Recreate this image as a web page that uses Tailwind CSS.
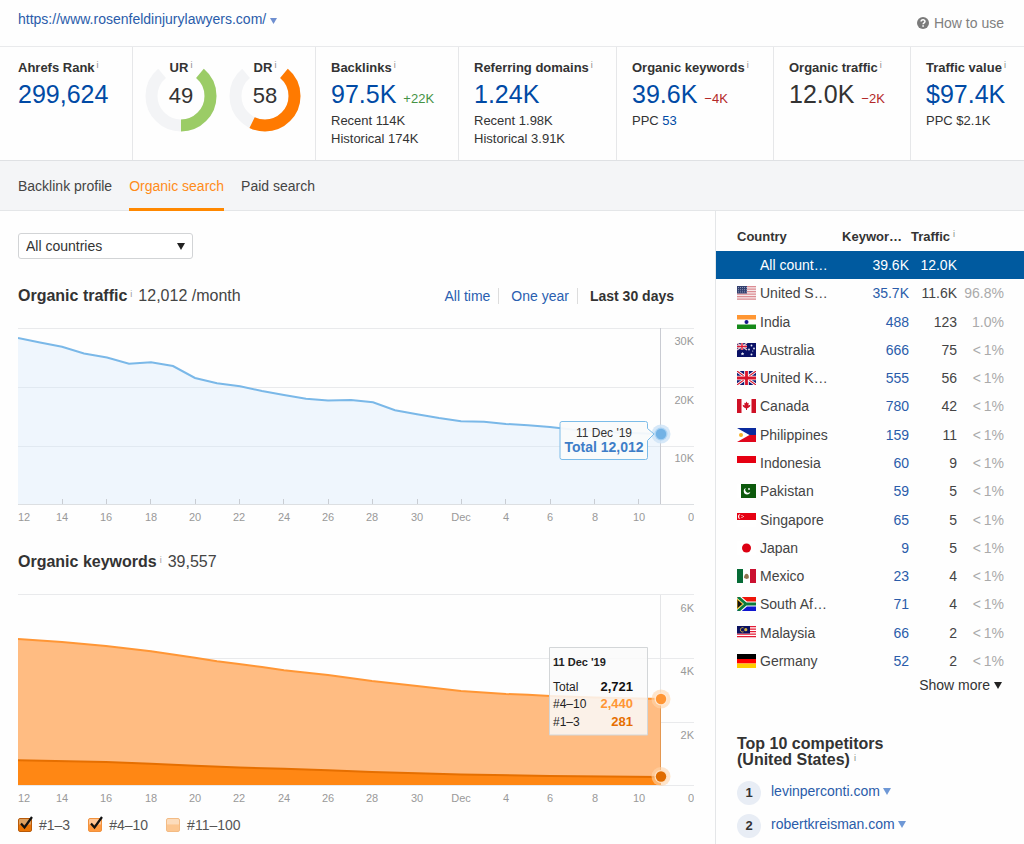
<!DOCTYPE html>
<html lang="en">
<head>
<meta charset="utf-8">
<meta name="viewport" content="width=device-width, initial-scale=1">
<title>Site overview</title>
<script src="https://cdn.jsdelivr.net/npm/@tailwindcss/browser@4"></script>
</head>
<body class="flex min-h-screen flex-col bg-[#fefefe] font-['Liberation_Sans',Arial,sans-serif] text-[#333]">

<header class="flex h-[47px] items-center justify-between border-b border-[#e9eaec] pl-[18px] pr-5">
  <a href="#" class="-mt-2 flex items-center gap-1 text-sm text-[#2a5caa]">https://www.rosenfeldinjurylawyers.com/
    <svg class="mt-1 h-[6px] w-[7px]" viewBox="0 0 7 6" aria-hidden="true"><path d="M0 0h7L3.500 6z" fill="#6f8fd0"/></svg></a>
  <a href="#" class="flex items-center gap-[5px] text-sm text-[#808080]">
    <svg class="h-3 w-3" viewBox="0 0 12 12" aria-hidden="true"><circle cx="6" cy="6" r="6" fill="#7b7b7b"/><path d="M4.100 4.600C4.100 2.200 8 2.300 8 4.500 8 5.900 6.100 5.700 6.100 7.200" fill="none" stroke="#fff" stroke-width="1.500"/><path d="M5.300 8.300h1.600v1.500H5.300z" fill="#fff"/></svg>
    How to use</a>
</header>

<section class="grid h-[114px] grid-cols-[133fr_183fr_143fr_158fr_157fr_137fr_113fr] border-b border-[#dfe1e4] text-[13px] leading-[18px] whitespace-nowrap *:border-r *:border-[#e6e7e9] *:pt-3 *:last:border-r-0">
  <div class="pl-[18px]">
    <h2 class="font-bold">Ahrefs Rank<sup class="ml-[2px] text-[9px] font-normal text-[#888]">i</sup></h2>
    <a href="#" class="block text-[25px] leading-[35px] text-[#004aa5]">299,624</a>
  </div>
  <div class="flex gap-3 pl-3">
    <div class="relative w-[72px]">
      <svg class="absolute left-0 top-[1px] h-[72px] w-[72px]" viewBox="0 0 72 72" fill="none" stroke-width="12" aria-hidden="true"><g transform="rotate(-90 36 36)"><circle cx="36" cy="36" r="29.500" pathLength="360" stroke="#f3f4f6" stroke-dasharray="280 360" stroke-dashoffset="-40"/><circle cx="36" cy="36" r="29.500" pathLength="360" stroke="#9bcc66" stroke-dasharray="140 360" stroke-dashoffset="-40"/></g></svg>
      <h2 class="relative text-center font-bold">UR<sup class="ml-[2px] text-[9px] font-normal text-[#888]">i</sup></h2>
      <p class="relative text-center text-[22px] leading-[37px]">49</p>
    </div>
    <div class="relative w-[72px]">
      <svg class="absolute left-0 top-[1px] h-[72px] w-[72px]" viewBox="0 0 72 72" fill="none" stroke-width="12" aria-hidden="true"><g transform="rotate(-90 36 36)"><circle cx="36" cy="36" r="29.500" pathLength="360" stroke="#f3f4f6" stroke-dasharray="280 360" stroke-dashoffset="-40"/><circle cx="36" cy="36" r="29.500" pathLength="360" stroke="#ff7a00" stroke-dasharray="166 360" stroke-dashoffset="-40"/></g></svg>
      <h2 class="relative text-center font-bold">DR<sup class="ml-[2px] text-[9px] font-normal text-[#888]">i</sup></h2>
      <p class="relative text-center text-[22px] leading-[37px]">58</p>
    </div>
  </div>
  <div class="pl-[15px]">
    <h2 class="font-bold">Backlinks<sup class="ml-[2px] text-[9px] font-normal text-[#888]">i</sup></h2>
    <p class="flex h-[35px] items-baseline gap-[7px] leading-[35px]"><a href="#" class="text-[25px] text-[#004aa5]">97.5K</a><span class="text-[#459245]">+22K</span></p>
    <p>Recent 114K</p>
    <p>Historical 174K</p>
  </div>
  <div class="pl-[15px]">
    <h2 class="font-bold">Referring domains<sup class="ml-[2px] text-[9px] font-normal text-[#888]">i</sup></h2>
    <a href="#" class="block text-[25px] leading-[35px] text-[#004aa5]">1.24K</a>
    <p>Recent 1.98K</p>
    <p>Historical 3.91K</p>
  </div>
  <div class="pl-[15px]">
    <h2 class="font-bold">Organic keywords<sup class="ml-[2px] text-[9px] font-normal text-[#888]">i</sup></h2>
    <p class="flex h-[35px] items-baseline gap-[7px] leading-[35px]"><a href="#" class="text-[25px] text-[#004aa5]">39.6K</a><span class="text-[#b32929]">−4K</span></p>
    <p>PPC <a href="#" class="text-[#004aa5]">53</a></p>
  </div>
  <div class="pl-[15px]">
    <h2 class="font-bold">Organic traffic<sup class="ml-[2px] text-[9px] font-normal text-[#888]">i</sup></h2>
    <p class="flex h-[35px] items-baseline gap-[7px] leading-[35px]"><span class="text-[25px]">12.0K</span><span class="text-[#b32929]">−2K</span></p>
  </div>
  <div class="pl-[15px]">
    <h2 class="font-bold">Traffic value<sup class="ml-[2px] text-[9px] font-normal text-[#888]">i</sup></h2>
    <a href="#" class="block text-[25px] leading-[35px] text-[#004aa5]">$97.4K</a>
    <p>PPC $2.1K</p>
  </div>
</section>

<nav class="flex h-[50px] gap-[17px] border-b border-[#e4e6e8] bg-[#f4f5f7] pl-[18px] text-sm text-[#444]">
  <a href="#" class="flex items-center">Backlink profile</a>
  <a href="#" class="-mb-px flex items-center border-b-[3px] border-[#ff8800] pt-[2px] text-[#ff8c1a]">Organic search</a>
  <a href="#" class="flex items-center">Paid search</a>
</nav>

<div class="flex flex-1">
<main class="min-w-0 flex-1 pl-[18px] pr-[21px] pt-[22px]">
  <div class="relative w-[175px]">
    <select aria-label="Country" class="block h-[26px] w-full appearance-none rounded-[3px] border border-[#d2d4d6] bg-white pl-[7px] text-sm leading-5 text-[#333]"><option>All countries</option></select>
    <svg class="pointer-events-none absolute right-2 top-[10px] h-[7px] w-2" viewBox="0 0 8 7" aria-hidden="true"><path d="M0 0h8L4 7z" fill="#222"/></svg>
  </div>

  <div class="mt-[25px] flex h-6 items-center justify-between">
    <h2 class="text-base font-bold">Organic traffic<sup class="ml-[3px] text-[9px] font-normal text-[#999]">i</sup><span class="ml-[6px] font-normal text-[#444]">12,012 /month</span></h2>
    <div class="mr-5 flex items-center text-sm">
      <a href="#" class="text-[#2a5fb0]">All time</a>
      <a href="#" class="ml-2 border-l border-[#ddd] pl-3 leading-4 text-[#2a5fb0]">One year</a>
      <a href="#" class="ml-2 border-l border-[#ddd] pl-3 leading-4 font-bold">Last 30 days</a>
    </div>
  </div>

  <svg class="mt-[7px] block h-auto w-full" viewBox="18 315 676 215" role="img" aria-label="Organic traffic chart">
    <g stroke="#e9eaec"><path d="M18 328.500H694M18 387.500H694M18 446.500H694"/><path d="M18 504.500H694" stroke="#dcdfe2"/></g>
    <path d="M18 338L40 342.500 62 346.700 84 353.500 107 357.500 129 363.700 151 362.300 173 366 195 378 217 383.300 240 386.300 262 391 284 395 306 398.800 328 400.600 351 400 373 402.300 395 410.300 417 414.300 439 418 461 421.200 484 421.700 506 424 528 425.200 550 427 572 429.500 595 431 617 432.500 639 433.300 661 434V504H18z" fill="#d5e8fb" fill-opacity=".35"/>
    <path d="M18 338L40 342.500 62 346.700 84 353.500 107 357.500 129 363.700 151 362.300 173 366 195 378 217 383.300 240 386.300 262 391 284 395 306 398.800 328 400.600 351 400 373 402.300 395 410.300 417 414.300 439 418 461 421.200 484 421.700 506 424 528 425.200 550 427 572 429.500 595 431 617 432.500 639 433.300 661 434" fill="none" stroke="#7ab8e8" stroke-width="2"/>
    <path d="M62.500 499v5M106.500 499v5M150.500 499v5M195.500 499v5M239.500 499v5M283.500 499v5M328.500 499v5M372.500 499v5M417.500 499v5M461.500 499v5M505.500 499v5M550.500 499v5M594.500 499v5M638.500 499v5" stroke="#c9cdd3"/>
    <path d="M660.500 328V504" stroke="#c9cbd2"/>
    <circle cx="661" cy="434" r="9.500" fill="#cfe4f7" fill-opacity=".85"/><circle cx="661" cy="434" r="6.500" fill="#a9d2f3"/><circle cx="661" cy="434" r="5.200" fill="#72b2e5"/>
    <path d="M562 421.500H645.500Q647.500 421.500 647.500 423.500V428.500L654 434 647.500 440.500V457.500Q647.500 459.500 645.500 459.500H562Q560 459.500 560 457.500V423.500Q560 421.500 562 421.500z" fill="#fafbfb" fill-opacity=".93" stroke="#7cbce8"/>
    <g text-anchor="middle"><text x="604" y="437" font-size="12" fill="#333">11 Dec '19</text><text x="604" y="452" font-size="14" font-weight="bold" fill="#3e7ec8">Total 12,012</text></g>
    <g font-size="11" fill="#999" text-anchor="middle">
      <text x="24" y="521">12</text><text x="62" y="521">14</text><text x="106" y="521">16</text><text x="151" y="521">18</text><text x="195" y="521">20</text><text x="239" y="521">22</text><text x="284" y="521">24</text><text x="328" y="521">26</text><text x="372" y="521">28</text><text x="417" y="521">30</text><text x="461" y="521">Dec</text><text x="506" y="521">4</text><text x="550" y="521">6</text><text x="595" y="521">8</text><text x="639" y="521">10</text>
    </g>
    <g font-size="11" fill="#999" text-anchor="end"><text x="694" y="345">30K</text><text x="694" y="404">20K</text><text x="694" y="462">10K</text><text x="694" y="521">0</text></g>
  </svg>

  <h2 class="mt-5 h-6 text-base font-bold">Organic keywords<sup class="ml-[3px] text-[9px] font-normal text-[#999]">i</sup><span class="ml-[6px] font-normal text-[#444]">39,557</span></h2>

  <svg class="mt-[11px] block h-auto w-full" viewBox="18 585 676 222" role="img" aria-label="Organic keywords chart">
    <path d="M18 594.500H694M18 658.500H694M18 722.500H694M18 785.500H694" stroke="#e9eaec"/>
    <path d="M660.500 595V785" stroke="#e4e5e7"/>
    <path d="M18 639L62 642 106 646 151 651.300 195 657.800 217 661.300 239 664 262 667 284 670.300 328 675 372 681 417 686 461 691 506 694 528 694.800 550 696 595 697.500 661 699V785H18z" fill="#ffbc82"/>
    <path d="M18 760.300L106 762 151 763.800 195 765.700 239 767.500 284 768.700 328 770.300 372 772 417 773.300 461 774.500 550 776 661 777V785H18z" fill="#ff8714"/>
    <path d="M18 639L62 642 106 646 151 651.300 195 657.800 217 661.300 239 664 262 667 284 670.300 328 675 372 681 417 686 461 691 506 694 528 694.800 550 696 595 697.500 661 699" fill="none" stroke="#ff9635" stroke-width="2"/>
    <path d="M18 760.300L106 762 151 763.800 195 765.700 239 767.500 284 768.700 328 770.300 372 772 417 773.300 461 774.500 550 776 661 777" fill="none" stroke="#e66f00" stroke-width="2"/>
    <path d="M660.500 699V785" stroke="#d8873a" stroke-opacity=".7"/>
    <circle cx="661" cy="699" r="9.500" fill="#ffd3a8" fill-opacity=".6"/><circle cx="661" cy="699" r="6.500" fill="#ffe9d4"/><circle cx="661" cy="699" r="5.200" fill="#ff9635"/>
    <circle cx="661" cy="776.500" r="9.500" fill="#ffd3a8" fill-opacity=".6"/><circle cx="661" cy="776.500" r="6.500" fill="#ffe0c0"/><circle cx="661" cy="776.500" r="5.200" fill="#e06c00"/>
    <path d="M549.500 647.500H647.500V735H549.500z" fill="#fafafa" fill-opacity=".85" stroke="#d3d6d8"/>
    <g font-size="12" fill="#222"><text x="553" y="666" font-weight="bold" font-size="11">11 Dec '19</text><text x="553" y="691">Total</text><text x="553" y="708">#4–10</text><text x="553" y="726">#1–3</text></g>
    <g font-size="13" font-weight="bold" text-anchor="end"><text x="633" y="691" fill="#111">2,721</text><text x="633" y="708" fill="#ff9635">2,440</text><text x="633" y="726" fill="#e66f00">281</text></g>
    <g font-size="11" fill="#999" text-anchor="middle">
      <text x="24" y="802">12</text><text x="62" y="802">14</text><text x="106" y="802">16</text><text x="151" y="802">18</text><text x="195" y="802">20</text><text x="239" y="802">22</text><text x="284" y="802">24</text><text x="328" y="802">26</text><text x="372" y="802">28</text><text x="417" y="802">30</text><text x="461" y="802">Dec</text><text x="506" y="802">4</text><text x="550" y="802">6</text><text x="595" y="802">8</text><text x="639" y="802">10</text>
    </g>
    <g font-size="11" fill="#999" text-anchor="end"><text x="694" y="612">6K</text><text x="694" y="675">4K</text><text x="694" y="739">2K</text><text x="694" y="802">0</text></g>
  </svg>

  <div class="mt-2 flex h-5 items-center gap-[18px] text-sm text-[#555]">
    <label class="relative flex items-center gap-[7px]"><input type="checkbox" checked class="peer h-[14px] w-[14px] appearance-none rounded-[2px] border border-[#b85a08] bg-linear-to-b from-[#dca060] from-40% to-[#ea7404] to-50%"><svg class="pointer-events-none invisible absolute left-[2px] top-0 h-4 w-[13px] peer-checked:visible" viewBox="0 0 13 16" fill="none" aria-hidden="true"><path d="M1 8.500L4.500 12.500 12 2" stroke="#111" stroke-width="2.200"/></svg>#1–3</label>
    <label class="relative flex items-center gap-[7px]"><input type="checkbox" checked class="peer h-[14px] w-[14px] appearance-none rounded-[2px] border border-[#f0913c] bg-linear-to-b from-[#ffc594] from-40% to-[#ff9a40] to-50%"><svg class="pointer-events-none invisible absolute left-[2px] top-0 h-4 w-[13px] peer-checked:visible" viewBox="0 0 13 16" fill="none" aria-hidden="true"><path d="M1 8.500L4.500 12.500 12 2" stroke="#111" stroke-width="2.200"/></svg>#4–10</label>
    <label class="relative flex items-center gap-[7px]"><input type="checkbox" class="peer h-[14px] w-[14px] appearance-none rounded-[2px] border border-[#f3bb84] bg-linear-to-b from-[#fcdcbc] from-40% to-[#fcc690] to-50%">#11–100</label>
  </div>
</main>

<aside class="w-[309px] shrink-0 border-l border-[#e4e6e8] pt-3">
  <table class="h-[452px] w-full table-fixed border-collapse text-right text-sm leading-5">
    <colgroup><col class="w-[118px]"><col class="w-[75px]"><col class="w-[48px]"><col></colgroup>
    <thead><tr class="h-7 text-[13px] whitespace-nowrap"><th class="pl-[21px] text-left">Country</th><th class="pr-[7px]">Keywor…</th><th class="text-left" colspan="2"><span class="pl-[2px]">Traffic</span><sup class="ml-[3px] text-[9px] font-normal text-[#888]">i</sup></th></tr></thead>
    <tbody class="text-[#444] [&_svg]:h-[14px] [&_svg]:w-[19px] [&_td:first-child]:pl-[21px] [&_td:last-child]:pr-5 [&_td:last-child]:text-[#aaa] [&_td:first-child>div]:flex [&_td:first-child>div]:items-center [&_td:first-child>div]:gap-1 [&_a]:text-[#2a5caa] whitespace-nowrap">
      <tr class="h-7 bg-[#005a9f] text-white"><td><div><span class="w-[19px]"></span>All count…</div></td><td>39.6K</td><td>12.0K</td><td></td></tr>
      <tr class="h-7"><td><div><svg viewBox="0 0 19 14"><path fill="#f6e9ea" d="M0 0h19v14H0z"/><path d="M0 .7h19M0 3.200h19M0 5.700h19M0 8.200h19M0 10.700h19M0 13.200h19" stroke="#dc8d94" stroke-width="1.200"/><path fill="#34406f" d="M0 0h10v7.500H0z"/><path d="M1 1.500h9M1 3.700h9M1 5.900h9" stroke="#8d96b5" stroke-dasharray="1 1"/></svg>United S…</div></td><td><a href="#">35.7K</a></td><td>11.6K</td><td>96.8%</td></tr>
      <tr class="h-7"><td><div><svg viewBox="0 0 19 14"><path fill="#fff" d="M0 0h19v14H0z"/><path fill="#ff9632" d="M0 0h19v4.500H0z"/><path fill="#158a1a" d="M0 9.500h19V14H0z"/><circle cx="9.500" cy="7" r="2" fill="#17178c"/></svg>India</div></td><td><a href="#">488</a></td><td>123</td><td>1.0%</td></tr>
      <tr class="h-7"><td><div><svg viewBox="0 0 19 14"><path fill="#0a1166" d="M0 0h19v14H0z"/><path d="M0 0L10 7M10 0L0 7" stroke="#e9bfc8" stroke-width="1.500"/><path d="M5 0v7M0 3.500h10" stroke="#fff" stroke-width="2.400"/><path d="M5 0v7M0 3.500h10" stroke="#dc1932" stroke-width="1.400"/><g fill="#e5e8f5"><path d="M4 10h1l.5-1 .5 1h1.200l-.8 1 .3 1.300-1.200-.6-1.200.6.300-1.300z"/><circle cx="14.500" cy="2.500" r=".9"/><circle cx="12" cy="6.500" r=".9"/><circle cx="17" cy="5.500" r=".9"/><circle cx="14.500" cy="11.500" r="1"/><circle cx="15.700" cy="8" r=".6"/></g></svg>Australia</div></td><td><a href="#">666</a></td><td>75</td><td>&lt;&thinsp;1%</td></tr>
      <tr class="h-7"><td><div><svg viewBox="0 0 19 14"><path fill="#101a73" d="M0 0h19v14H0z"/><path d="M0 0L19 14M19 0L0 14" stroke="#fff" stroke-width="3"/><path d="M0 0L19 14M19 0L0 14" stroke="#d9142c" stroke-width="1.100"/><path d="M9.500 0v14M0 7h19" stroke="#fff" stroke-width="4.600"/><path d="M9.500 0v14M0 7h19" stroke="#d9142c" stroke-width="2.800"/></svg>United K…</div></td><td><a href="#">555</a></td><td>56</td><td>&lt;&thinsp;1%</td></tr>
      <tr class="h-7"><td><div><svg viewBox="0 0 19 14"><path fill="#fff" d="M0 0h19v14H0z"/><path fill="#cf1126" d="M0 0h4.500v14H0zM14.500 0H19v14h-4.500zM9.500 2.500l1 1.800 1.200-.5-.4 2.600 2-.6-.3 1.600-2.300 1.900H10v1.700H9V9.300H8.300L6 7.400l-.3-1.600 2 .6-.4-2.600 1.200.5z"/></svg>Canada</div></td><td><a href="#">780</a></td><td>42</td><td>&lt;&thinsp;1%</td></tr>
      <tr class="h-7"><td><div><svg viewBox="0 0 19 14"><path fill="#0a2a9e" d="M0 0h19v7H0z"/><path fill="#e0061c" d="M0 7h19v7H0z"/><path fill="#fff" d="M0 0l12.500 7L0 14z"/><circle cx="4" cy="7" r="2" fill="#f8b229"/></svg>Philippines</div></td><td><a href="#">159</a></td><td>11</td><td>&lt;&thinsp;1%</td></tr>
      <tr class="h-7"><td><div><svg viewBox="0 0 19 14"><path fill="#e60012" d="M0 0h19v7H0z"/><path fill="#fff" d="M0 7h19v7H0z"/></svg>Indonesia</div></td><td><a href="#">60</a></td><td>9</td><td>&lt;&thinsp;1%</td></tr>
      <tr class="h-7"><td><div><svg viewBox="0 0 19 14"><path fill="#fff" d="M0 0h4v14H0z"/><path fill="#0c590c" d="M4 0h15v14H4z"/><path d="M9 4a3.300 3.300 0 1 0 4.300 3.700 2.800 2.800 0 1 1-4.300-3.700z" fill="#fff"/><circle cx="12" cy="5" r=".9" fill="#fff"/></svg>Pakistan</div></td><td><a href="#">59</a></td><td>5</td><td>&lt;&thinsp;1%</td></tr>
      <tr class="h-7"><td><div><svg viewBox="0 0 19 14"><path fill="#e60012" d="M0 0h19v7H0z"/><path fill="#fff" d="M0 7h19v7H0z"/><path d="M3.500 1a2.500 2.500 0 0 0 0 5 3 3 0 0 1 0-5z" fill="#fff"/><circle cx="5" cy="2.500" r=".6" fill="#fff"/><circle cx="5" cy="4.500" r=".6" fill="#fff"/><circle cx="6.300" cy="3.500" r=".6" fill="#fff"/></svg>Singapore</div></td><td><a href="#">65</a></td><td>5</td><td>&lt;&thinsp;1%</td></tr>
      <tr class="h-7"><td><div><svg viewBox="0 0 19 14"><path fill="#fff" d="M0 0h19v14H0z"/><circle cx="9.500" cy="7" r="4.500" fill="#dc0012"/></svg>Japan</div></td><td><a href="#">9</a></td><td>5</td><td>&lt;&thinsp;1%</td></tr>
      <tr class="h-7"><td><div><svg viewBox="0 0 19 14"><path fill="#fff" d="M0 0h19v14H0z"/><path fill="#066b36" d="M0 0h6v14H0z"/><path fill="#cb1030" d="M13 0h6v14h-6z"/><path d="M7 9c0-2.500 1-4.200 2.700-4.200 1.700.5 2.500 2.200 2 4.500l-2 .8z" fill="#8f7350"/></svg>Mexico</div></td><td><a href="#">23</a></td><td>4</td><td>&lt;&thinsp;1%</td></tr>
      <tr class="h-7"><td><div><svg viewBox="0 0 19 14"><path fill="#ee1509" d="M0 0h19v7H0z"/><path fill="#1016d0" d="M0 7h19v7H0z"/><path d="M1 0l8 7-8 7M8.500 7H19" fill="none" stroke="#fff" stroke-width="5"/><path d="M1 0l8 7-8 7M8.500 7H19" fill="none" stroke="#0a7b3b" stroke-width="2.800"/><path d="M0 2l5.800 5L0 12z" fill="#111" stroke="#f4b90f"/></svg>South Af…</div></td><td><a href="#">71</a></td><td>4</td><td>&lt;&thinsp;1%</td></tr>
      <tr class="h-7"><td><div><svg viewBox="0 0 19 14"><path fill="#fff" d="M0 0h19v12.500H0z"/><path d="M0 .7h19M0 3.200h19M0 5.700h19M0 8.200h19M0 10.700h19" stroke="#e31c36" stroke-width="1.200"/><path fill="#0b1160" d="M0 0h13v7.500H0z"/><path d="M6.500 1.800a2.200 2.200 0 1 0 0 4" fill="none" stroke="#d9b53c"/><circle cx="8.800" cy="3.700" r="1.600" fill="#d9b53c"/></svg>Malaysia</div></td><td><a href="#">66</a></td><td>2</td><td>&lt;&thinsp;1%</td></tr>
      <tr class="h-7"><td><div><svg viewBox="0 0 19 14"><path fill="#000" d="M0 0h19v5H0z"/><path fill="#f00" d="M0 5h19v4.500H0z"/><path fill="#ffcd00" d="M0 9.500h19V14H0z"/></svg>Germany</div></td><td><a href="#">52</a></td><td>2</td><td>&lt;&thinsp;1%</td></tr>
    </tbody>
  </table>
  <button type="button" class="ml-auto mr-[22px] flex items-center gap-1 text-sm leading-5 text-[#333]">Show more<svg class="h-[7px] w-2" viewBox="0 0 8 7" aria-hidden="true"><path d="M0 0h8L4 7z" fill="#222"/></svg></button>

  <h2 class="ml-[21px] mt-[41px] text-base leading-4 font-bold">Top 10 competitors<br>(United States)<sup class="ml-1 text-[9px] font-normal text-[#888]">i</sup></h2>
  <ol class="ml-[21px] mt-[13px] space-y-[9px] text-sm">
    <li class="flex gap-[10px]"><span class="flex h-6 w-6 items-center justify-center rounded-full bg-[#e8edf5] text-[13px] font-bold">1</span><a href="#" class="flex items-center gap-[3px] self-start text-[#2a5caa]">levinperconti.com<svg class="h-[7px] w-2" viewBox="0 0 8 7" aria-hidden="true"><path d="M0 0h8L4 7z" fill="#6f98d6"/></svg></a></li>
    <li class="flex gap-[10px]"><span class="flex h-6 w-6 items-center justify-center rounded-full bg-[#e8edf5] text-[13px] font-bold">2</span><a href="#" class="flex items-center gap-[3px] self-start text-[#2a5caa]">robertkreisman.com<svg class="h-[7px] w-2" viewBox="0 0 8 7" aria-hidden="true"><path d="M0 0h8L4 7z" fill="#6f98d6"/></svg></a></li>
  </ol>
</aside>
</div>
</body>
</html>
